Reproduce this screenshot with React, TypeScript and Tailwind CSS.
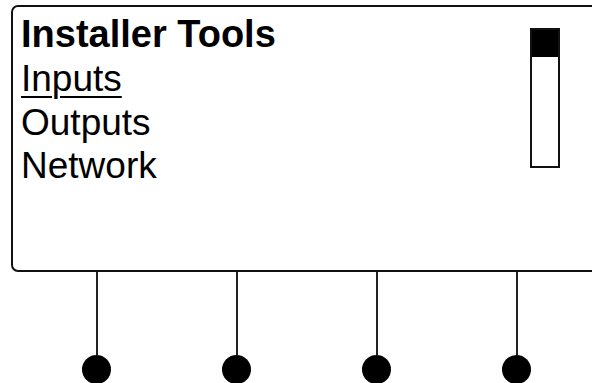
export default function App() {
  const buttons = [0, 1, 2, 3];

  return (
    <div className="w-[592px] h-[383px] overflow-hidden bg-white relative font-['Liberation_Sans',Arial,sans-serif] text-black">
      {/* display screen */}
      <div className="ml-[11px] mt-[5px] w-[620px] h-[267px] border-2 border-[#111] rounded-[7px] flex">
        <div className="pl-[8px] pt-[4px] flex flex-col text-[37px] leading-[44px] w-[510px]">
          <div className="font-bold text-[38px] leading-[46px]">Installer Tools</div>
          <div className="underline decoration-2 underline-offset-[5px]">Inputs</div>
          <div>Outputs</div>
          <div className="-mt-[1px]">Network</div>
        </div>
        <div className="mt-[21px] ml-[7px] w-[30px] h-[140px] border-2 border-[#111] flex flex-col">
          <div className="h-[27px] bg-black" />
        </div>
      </div>

      {/* soft keys */}
      <div className="flex pl-[82px] gap-[111px]">
        {buttons.map((b) => (
          <div key={b} className="w-[29px] flex flex-col items-center">
            <div className="w-[2px] h-[83px] bg-[#222]" />
            <div className="w-[29px] h-[29px] rounded-full bg-black" />
          </div>
        ))}
      </div>
    </div>
  );
}
